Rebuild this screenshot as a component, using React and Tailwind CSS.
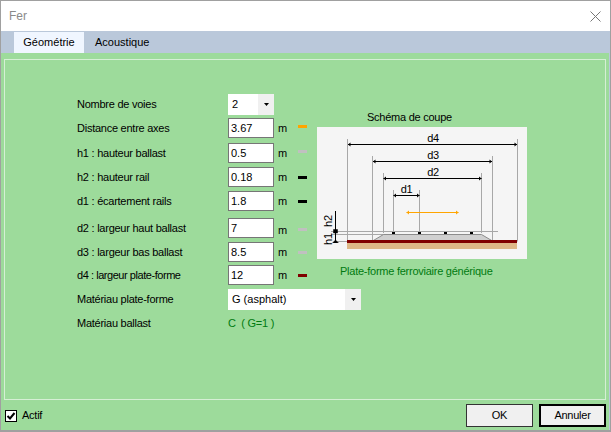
import React from "react";

const fields = [
  { label: "Distance entre axes", value: "3.67", color: "bg-[#ffa500] mb-[4px]", gap: "mt-[3px]", unit: "", text: "" },
  { label: "h1 : hauteur ballast", value: "0.5", color: "bg-[#c0c0c0] mb-[4px]", gap: "mt-[5px]", unit: "", text: "" },
  { label: "h2 : hauteur rail", value: "0.18", color: "bg-black", gap: "mt-[4px]", unit: "", text: "" },
  { label: "d1 : écartement rails", value: "1.8", color: "bg-black", gap: "mt-[4px]", unit: "", text: "" },
  { label: "d2 : largeur haut ballast", value: "7", color: "bg-[#c0c0c0] mt-[2px]", gap: "mt-[7px]", unit: "pt-[4px]", text: "" },
  { label: "d3 : largeur bas ballast", value: "8.5", color: "bg-[#c0c0c0]", gap: "mt-[4px]", unit: "", text: "" },
  { label: "d4 : largeur plate-forme", value: "12", color: "bg-[#800000]", gap: "mt-[3px]", unit: "", text: "tracking-[-0.45px]" },
];

const ComboArrow = () => (
  <div className="w-[16px] h-full bg-[#f0f0f0] flex items-center justify-center">
    <svg width="5" height="3" viewBox="0 0 5 3">
      <path d="M0 0H5L2.5 3Z" fill="#000" />
    </svg>
  </div>
);

// one dimension line of the section drawing, with small arrow ends
const Dim = ({ x1, x2, y, color = "#000" }) => (
  <g stroke={color} fill={color}>
    <line x1={x1} x2={x2} y1={y} y2={y} strokeWidth="1" />
    <path d={`M${x1} ${y}L${x1 + 2.5} ${y - 2}V${y + 2}Z`} stroke="none" />
    <path d={`M${x2} ${y}L${x2 - 2.5} ${y - 2}V${y + 2}Z`} stroke="none" />
  </g>
);

const Schema = () => (
  <svg width="210" height="132" viewBox="0 0 210 132" className="block bg-[#f5f5f5]">
    <g stroke="#a8a8a8" strokeWidth="1" fill="none">
      <path d="M30.5 12V114.5M200.5 12V114.5" />
      <path d="M55.5 29V114.5M175.5 29V114.5" />
      <path d="M66.5 46V106M164.5 46V106" />
      <path d="M76.5 63V106M102.5 63V106" />
      <path d="M14 104.5H181M14 107.5H67M19 114.5H31" />
    </g>
    <path d="M66.5 107.5H164.5L175.5 114H55.5Z" fill="#d0d0d0" stroke="#8c8c8c" strokeWidth="1" />
    <rect x="30" y="113" width="170" height="3" fill="#800000" />
    <rect x="30" y="116" width="170" height="6" fill="#deb887" />
    {[75, 101, 127, 153].map((x) => (
      <rect key={x} x={x} y="105" width="3" height="2" fill="#000" />
    ))}
    <Dim x1={31} x2={200} y={17.5} />
    <Dim x1={56} x2={175} y={34.5} />
    <Dim x1={66.5} x2={164.5} y={51.5} />
    <Dim x1={76.5} x2={102.5} y={68.5} />
    <Dim x1={89.5} x2={141.5} y={85.5} color="#ffa500" />
    <path d="M18.5 84V115" stroke="#000" strokeWidth="1" />
    <path d="M16.5 102.5H20.5V106H16.5ZM15.5 116L18.5 113L21.5 116" fill="#000" stroke="#000" strokeWidth="0.5" />
    <g fontFamily="'Liberation Sans', sans-serif" fontSize="11" fill="#000" textAnchor="middle">
      <text x="116" y="15">d4</text>
      <text x="116" y="32">d3</text>
      <text x="116" y="49">d2</text>
      <text x="89.5" y="66">d1</text>
      <text transform="translate(15 94) rotate(-90)">h2</text>
      <text transform="translate(15 112) rotate(-90)">h1</text>
    </g>
  </svg>
);

export default function App() {
  return (
    <div className="w-[611px] h-[432px] flex flex-col bg-[#bac8da] border border-[#a0a0a0] border-b-2 text-[11px] leading-none tracking-[-0.25px] text-black font-['Liberation_Sans',sans-serif] overflow-hidden">
      {/* Title bar */}
      <div className="h-[30px] shrink-0 bg-white flex items-center justify-between pl-[8px] pr-[9px]">
        <span className="text-[12px] tracking-normal text-[#8a8a8a]">Fer</span>
        <svg width="11" height="11" viewBox="0 0 11 11" stroke="#777" strokeWidth="1">
          <path d="M0.5 0.5L10.5 10.5M10.5 0.5L0.5 10.5" />
        </svg>
      </div>

      {/* Tabs */}
      <div className="h-[22px] shrink-0 flex pl-[13px] tracking-normal">
        <div className="w-[70px] h-[21px] mt-px bg-[#f0f6ff] flex items-center justify-center">Géométrie</div>
        <div className="ml-[11px] h-[21px] mt-px flex items-center">Acoustique</div>
      </div>

      {/* Panel */}
      <div className="flex-1 mr-[1px] bg-[#9ddb9b] flex flex-col">
        <div className="h-[341px] mt-[6px] ml-[3px] mr-[3px] border border-[#d6efd5] pl-[72px] pt-[34px]">
          <div className="flex">
            <div className="w-[240px]">
              <div className="flex h-[21px]">
                <span className="w-[151px] flex items-center">Nombre de voies</span>
                <div className="w-[46px] bg-white flex items-center justify-between">
                  <span className="pl-[4px] tracking-normal">2</span>
                  <ComboArrow />
                </div>
              </div>
              {fields.map((f) => (
                <div key={f.label} className={`flex items-center h-[20px] ${f.gap}`}>
                  <span className={`w-[151px] ${f.text}`}>{f.label}</span>
                  <div className="w-[46px] h-full bg-white border border-[#767676] pl-[2px] flex items-center tracking-normal">{f.value}</div>
                  <span className={`w-[24px] pl-[4px] ${f.unit}`}>m</span>
                  <span className={`w-[9px] h-[3px] ${f.color}`} />
                </div>
              ))}
            </div>
            <div className="flex flex-col">
              <div className="mt-[18px] h-[15px] pl-[50px]">Schéma de coupe</div>
              <Schema />
              <div className="mt-[7px] pl-[23px] text-[#007a10]">Plate-forme ferroviaire générique</div>
            </div>
          </div>

          <div className="flex h-[21px] mt-[4px]">
            <span className="w-[151px] flex items-center">Matériau plate-forme</span>
            <div className="w-[133px] bg-white flex items-center justify-between">
              <span className="pl-[4px] tracking-normal">G (asphalt)</span>
              <ComboArrow />
            </div>
          </div>
          <div className="flex items-center h-[14px] mt-[6px]">
            <span className="w-[151px]">Matériau ballast</span>
            <span className="text-[#007a10] whitespace-pre">C  ( G=1 )</span>
          </div>
        </div>

        {/* Footer */}
        <div className="flex items-center justify-between pl-[4px] pr-[3px] mt-[4px]">
          <div className="flex items-center gap-[5px]">
            <div className="w-[12px] h-[12px] bg-white border border-black flex items-center justify-center">
              <svg width="10" height="10" viewBox="0 0 10 10" fill="none" stroke="#000" strokeWidth="2">
                <path d="M1.5 5L4 7.5L8.5 2" />
              </svg>
            </div>
            <span>Actif</span>
          </div>
          <div className="flex gap-[6px]">
            <button className="w-[67px] h-[23px] bg-[#f0f0f0] border border-[#333]">OK</button>
            <button className="w-[67px] h-[23px] bg-[#f0f0f0] border-2 border-black">Annuler</button>
          </div>
        </div>
      </div>
    </div>
  );
}
